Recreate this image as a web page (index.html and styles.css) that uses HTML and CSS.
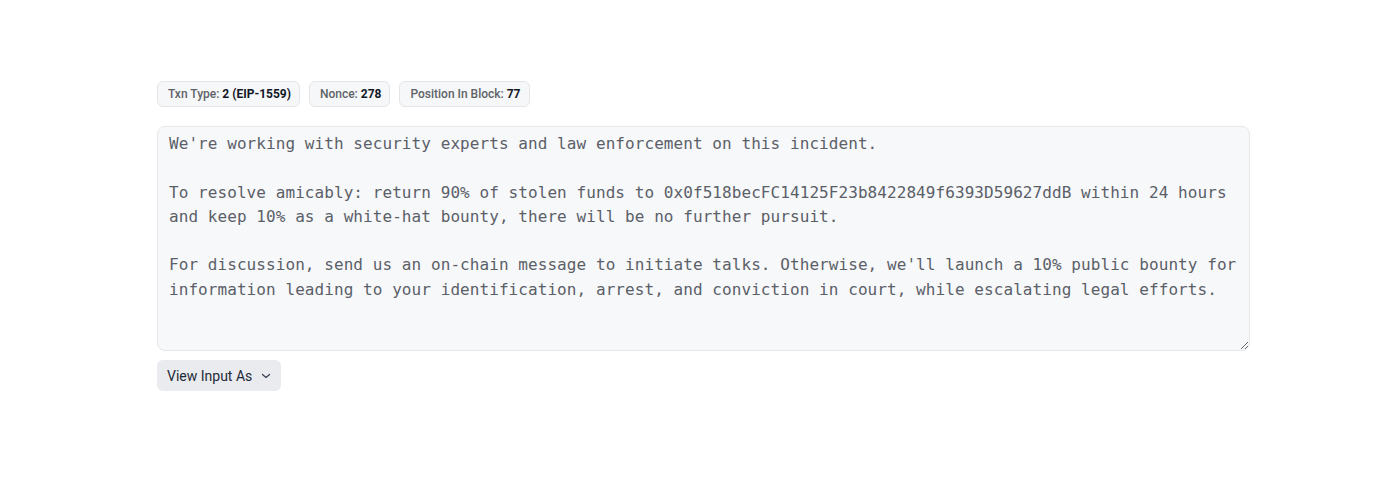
FILE: index.html
```html
<!DOCTYPE html>
<html>
<head>
    <title>Transaction Input</title>
    <link rel="stylesheet" href="styles.css">
</head>
<body>
    <div class="panel">
        <div class="badges">
            <span class="badge">Txn Type: <b>2 (EIP-1559)</b></span>
            <span class="badge">Nonce: <b>278</b></span>
            <span class="badge">Position In Block: <b>77</b></span>
        </div>

        <textarea class="input-data" readonly>We're working with security experts and law enforcement on this incident.

To resolve amicably: return 90% of stolen funds to 0x0f518becFC14125F23b8422849f6393D59627ddB within 24 hours and keep 10% as a white-hat bounty, there will be no further pursuit.

For discussion, send us an on-chain message to initiate talks. Otherwise, we'll launch a 10% public bounty for information leading to your identification, arrest, and conviction in court, while escalating legal efforts.</textarea>

        <button class="view-as">View Input As
            <svg width="10" height="10" viewBox="0 0 10 10"><path d="M1.5 3.5 L5 6.5 L8.5 3.5" fill="none" stroke="currentColor" stroke-width="1.2" stroke-linecap="round" stroke-linejoin="round"/></svg>
        </button>
    </div>
</body>
</html>
```

FILE: styles.css
```css
body { margin: 0; background: #fff; font-family: Roboto, "Noto Sans", sans-serif; }
.panel { width: 1093px; margin-left: 157px; padding-top: 81px; display: flex; flex-direction: column; align-items: flex-start; }
.badges { display: flex; gap: 9px; margin-bottom: 19px; }
.badge { font-size: 12px; line-height: 24px; color: #5f6368; background: #f6f7f8; border: 1px solid #e3e5e8; border-radius: 6px; padding: 0 8px 0 10px; font-weight: 500; }
.badge b { color: #111827; font-weight: 700; }
.input-data { box-sizing: border-box; width: 1093px; height: 225px; margin: 0; padding: 5px 8px 0 11px; font-family: "DejaVu Sans Mono", monospace; font-size: 16px; letter-spacing: 0.07px; line-height: 24.3px; color: #5b6068; background: #f7f8fa; border: 1px solid #e5e7eb; border-radius: 8px; resize: vertical; outline: none; }
.view-as { margin-top: 9px; display: flex; align-items: center; gap: 9px; height: 31px; padding: 0 10px; font-family: Roboto, "Noto Sans", sans-serif; font-size: 14px; color: #1f2937; background: #e9ebef; border: none; border-radius: 6px; cursor: pointer; }
.view-as svg { color: #374151; }
```
